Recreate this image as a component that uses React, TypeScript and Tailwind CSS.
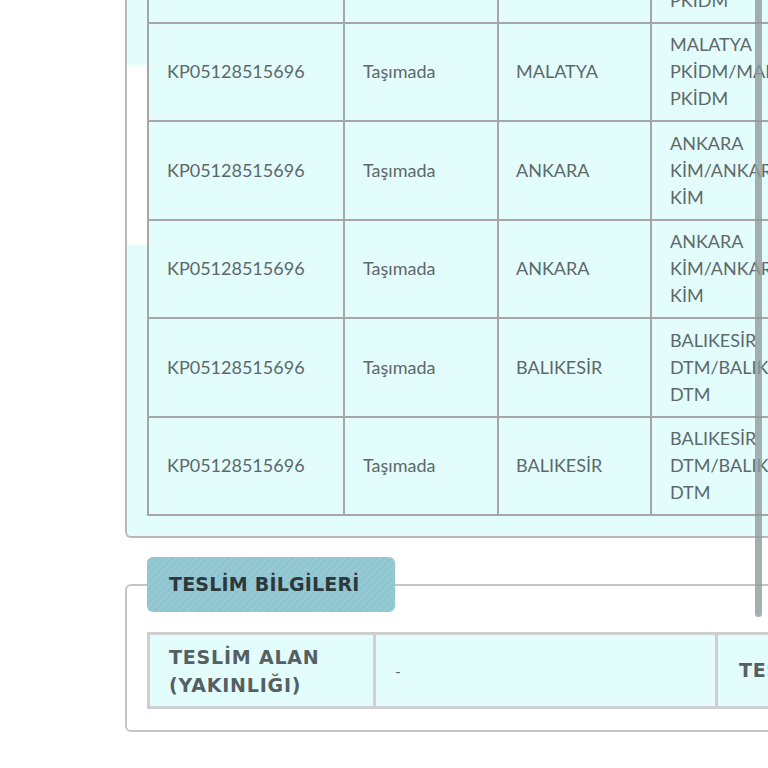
const rows = [
  { code: "KP05128515696", status: "Taşımada", city: "MALATYA", unit: ["MALATYA", "PKİDM/MALATYA", "PKİDM"] },
  { code: "KP05128515696", status: "Taşımada", city: "MALATYA", unit: ["MALATYA", "PKİDM/MALATYA", "PKİDM"] },
  { code: "KP05128515696", status: "Taşımada", city: "ANKARA", unit: ["ANKARA", "KİM/ANKARA", "KİM"] },
  { code: "KP05128515696", status: "Taşımada", city: "ANKARA", unit: ["ANKARA", "KİM/ANKARA", "KİM"] },
  { code: "KP05128515696", status: "Taşımada", city: "BALIKESİR", unit: ["BALIKESİR", "DTM/BALIKESİR", "DTM"] },
  { code: "KP05128515696", status: "Taşımada", city: "BALIKESİR", unit: ["BALIKESİR", "DTM/BALIKESİR", "DTM"] },
];

const heading = { fontFamily: "'DejaVu Sans', Verdana, sans-serif" };

export default function App() {
  return (
    <div
      className="relative h-[768px] w-[768px] overflow-hidden bg-white"
      style={{ fontFamily: "Lato, 'Open Sans', sans-serif" }}
    >
      <div className="-mt-[77px] flex w-[900px] flex-col">
        {/* hareket tablosu */}
        <div className="ml-[125px] flex w-[760px] rounded-bl-md border-b-2 border-l-2 border-[#b9b9b9] bg-[#e3fdfd] pb-[20px]">
          <div className="flex w-[20px] shrink-0 flex-col">
            <div className="h-[142px]" />
            <div className="h-[180px] bg-white" />
            <div className="flex-1" />
          </div>
          <table className="border-collapse text-[18px] text-[#5e6869]">
            <tbody>
              {rows.map((r, i) => (
                <tr key={i} className="h-[98.5px]">
                  <td className="w-[196px] border-2 border-[#a6a6a6] pl-[18px]">{r.code}</td>
                  <td className="w-[154px] border-2 border-[#a6a6a6] pl-[18px]">{r.status}</td>
                  <td className="w-[153px] border-2 border-[#a6a6a6] pl-[17px]">{r.city}</td>
                  <td className="w-[190px] border-2 border-[#a6a6a6] pl-[18px] leading-[27px]">
                    {r.unit.map((l, j) => (
                      <div key={j}>{l}</div>
                    ))}
                  </td>
                </tr>
              ))}
            </tbody>
          </table>
        </div>

        {/* teslim bilgileri */}
        <div className="ml-[125px] mt-[19px] flex w-[760px] flex-col">
          <div className="relative z-10 ml-[22px] flex h-[55px] w-[248px] items-center rounded-md bg-[#8fc5d0] bg-[repeating-linear-gradient(135deg,rgba(255,255,255,0.08)_0px,rgba(255,255,255,0.08)_2px,transparent_2px,transparent_5px)] pl-[22px]">
            <span className="text-[19px] font-bold tracking-[0.2px] text-[#2c383c]" style={heading}>
              TESLİM BİLGİLERİ
            </span>
          </div>
          <div className="-mt-[28px] rounded-md border-2 border-[#c4c4c4] pb-[21px] pl-[20px] pt-[46px]">
            <div className="flex h-[77px] border-[3px] border-[#cfcfcf] bg-[#e3fdfd]">
              <div
                className="flex w-[226px] shrink-0 flex-col justify-center border-r-[3px] border-[#cfcfcf] pl-[19px] text-[19px] font-bold leading-[28px] tracking-[0.8px] text-[#566062]"
                style={heading}
              >
                <span>TESLİM ALAN</span>
                <span>(YAKINLIĞI)</span>
              </div>
              <div className="flex w-[342px] shrink-0 items-center border-r-[3px] border-[#cfcfcf] pl-[19px] text-[16px] text-[#5e6869]">
                -
              </div>
              <div
                className="flex shrink-0 items-center pl-[21px] text-[19px] font-bold tracking-[0.8px] text-[#566062]"
                style={heading}
              >
                TESLİM TARİHİ
              </div>
            </div>
          </div>
        </div>
      </div>

      {/* kaydırma çubuğu */}
      <div className="absolute left-[755px] top-0 h-[617px] w-[7px] rounded-b-full bg-[#8e9b9b]/80" />
    </div>
  );
}
